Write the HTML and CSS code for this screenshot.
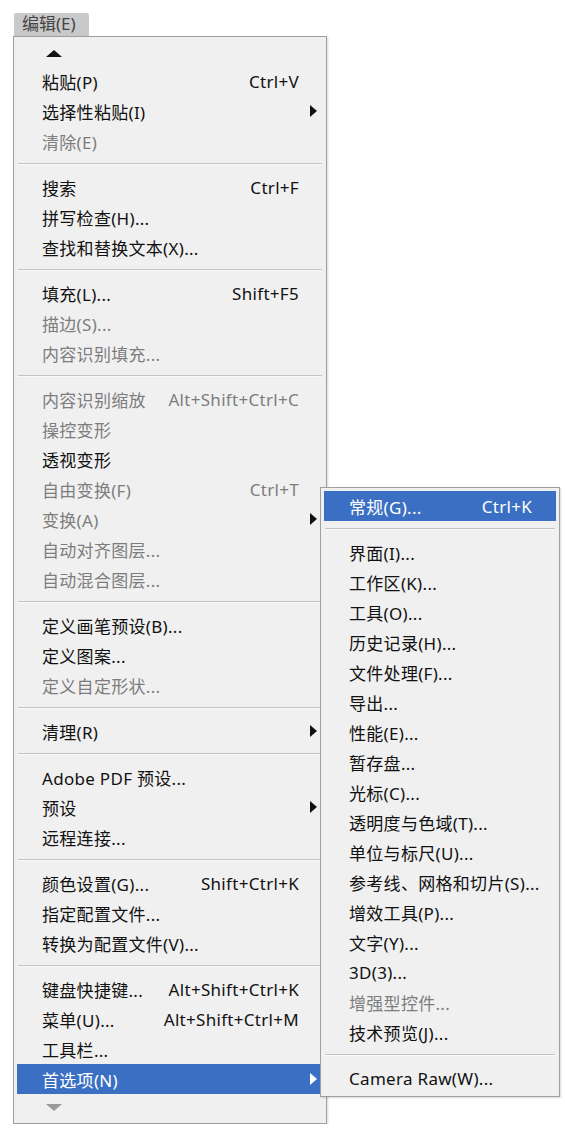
FILE: index.html
```html
<!DOCTYPE html>
<html lang="zh-CN">
<head>
    <meta charset="UTF-8">
    <meta name="viewport" content="width=device-width, initial-scale=1.0">
    <title>编辑菜单</title>
    <link rel="stylesheet" href="styles.css">
</head>
<body>
    <div class="menubar">
        <div class="menu-title">编辑(E)</div>

        <div class="menu">
            <div class="scroll up"></div>

            <div class="item"><span>粘贴(P)</span><span class="key">Ctrl+V</span></div>
            <div class="item"><span>选择性粘贴(I)</span><span></span><span class="arrow"></span></div>
            <div class="item off"><span>清除(E)</span></div>
            <div class="sep"></div>

            <div class="item"><span>搜索</span><span class="key">Ctrl+F</span></div>
            <div class="item"><span>拼写检查(H)...</span></div>
            <div class="item"><span>查找和替换文本(X)...</span></div>
            <div class="sep"></div>

            <div class="item"><span>填充(L)...</span><span class="key">Shift+F5</span></div>
            <div class="item off"><span>描边(S)...</span></div>
            <div class="item off"><span>内容识别填充...</span></div>
            <div class="sep"></div>

            <div class="item off"><span>内容识别缩放</span><span class="key">Alt+Shift+Ctrl+C</span></div>
            <div class="item off"><span>操控变形</span></div>
            <div class="item"><span>透视变形</span></div>
            <div class="item off"><span>自由变换(F)</span><span class="key">Ctrl+T</span></div>
            <div class="item off"><span>变换(A)</span><span></span><span class="arrow"></span></div>
            <div class="item off"><span>自动对齐图层...</span></div>
            <div class="item off"><span>自动混合图层...</span></div>
            <div class="sep"></div>

            <div class="item"><span>定义画笔预设(B)...</span></div>
            <div class="item"><span>定义图案...</span></div>
            <div class="item off"><span>定义自定形状...</span></div>
            <div class="sep"></div>

            <div class="item"><span>清理(R)</span><span></span><span class="arrow"></span></div>
            <div class="sep"></div>

            <div class="item"><span>Adobe PDF 预设...</span></div>
            <div class="item"><span>预设</span><span></span><span class="arrow"></span></div>
            <div class="item"><span>远程连接...</span></div>
            <div class="sep"></div>

            <div class="item"><span>颜色设置(G)...</span><span class="key">Shift+Ctrl+K</span></div>
            <div class="item"><span>指定配置文件...</span></div>
            <div class="item"><span>转换为配置文件(V)...</span></div>
            <div class="sep"></div>

            <div class="item"><span>键盘快捷键...</span><span class="key">Alt+Shift+Ctrl+K</span></div>
            <div class="item"><span>菜单(U)...</span><span class="key">Alt+Shift+Ctrl+M</span></div>
            <div class="item"><span>工具栏...</span></div>
            <div class="item active"><span>首选项(N)</span><span></span><span class="arrow"></span></div>

            <div class="scroll down"></div>
        </div>

        <div class="menu submenu">
            <div class="item active"><span>常规(G)...</span><span class="key">Ctrl+K</span></div>
            <div class="sep"></div>
            <div class="item"><span>界面(I)...</span></div>
            <div class="item"><span>工作区(K)...</span></div>
            <div class="item"><span>工具(O)...</span></div>
            <div class="item"><span>历史记录(H)...</span></div>
            <div class="item"><span>文件处理(F)...</span></div>
            <div class="item"><span>导出...</span></div>
            <div class="item"><span>性能(E)...</span></div>
            <div class="item"><span>暂存盘...</span></div>
            <div class="item"><span>光标(C)...</span></div>
            <div class="item"><span>透明度与色域(T)...</span></div>
            <div class="item"><span>单位与标尺(U)...</span></div>
            <div class="item"><span>参考线、网格和切片(S)...</span></div>
            <div class="item"><span>增效工具(P)...</span></div>
            <div class="item"><span>文字(Y)...</span></div>
            <div class="item"><span>3D(3)...</span></div>
            <div class="item off"><span>增强型控件...</span></div>
            <div class="item"><span>技术预览(J)...</span></div>
            <div class="sep"></div>
            <div class="item"><span>Camera Raw(W)...</span></div>
        </div>
    </div>
</body>
</html>
```

FILE: styles.css
```css
body {
    margin: 0;
    background-color: #fff;
    font-family: 'Noto Sans', 'Noto Sans CJK SC', sans-serif;
    font-size: 17px;
    letter-spacing: 0.3px;
    color: #111;
}

.menubar {
    position: relative;
    width: 314px;
    padding: 13px 0 0 13px;
}

.menu-title {
    width: 67px;
    height: 23px;
    margin-left: 1px;
    padding-left: 8px;
    line-height: 22px;
    letter-spacing: 0;
    color: #444;
    background-color: #c9c9c9;
    border-radius: 2px 2px 0 0;
}

.menu {
    background-color: #f0f0f0;
    border: 1px solid #9e9e9e;
    padding: 3px;
    box-shadow: 1px 1px 2px rgba(0, 0, 0, 0.15);
}

.item {
    display: grid;
    grid-template-columns: 1fr auto 24px;
    align-items: center;
    height: 30px;
    padding-left: 25px;
    white-space: nowrap;
}

.item.off {
    color: #7d7d7d;
}

.item.active {
    background-color: #3b6fc3;
    color: #fff;
}

.key {
    text-align: right;
}

.arrow {
    width: 0;
    height: 0;
    margin-left: 11px;
    border-top: 6px solid transparent;
    border-bottom: 6px solid transparent;
    border-left: 7px solid #111;
}

.item.active .arrow {
    border-left-color: #fff;
}

.sep {
    height: 1px;
    margin: 7px 1px 7px;
    background-color: #c3c3c3;
    border-bottom: 1px solid #fafafa;
}

.scroll {
    height: 26px;
    display: flex;
    align-items: center;
    padding-left: 29px;
}

.scroll::before {
    content: '';
    width: 0;
    height: 0;
    border-left: 8px solid transparent;
    border-right: 8px solid transparent;
}

.scroll.up::before {
    border-bottom: 7px solid #111;
}

.scroll.down::before {
    border-top: 7px solid #9a9a9a;
}

.submenu {
    position: absolute;
    left: 320px;
    top: 487px;
    width: 232px;
}
```
